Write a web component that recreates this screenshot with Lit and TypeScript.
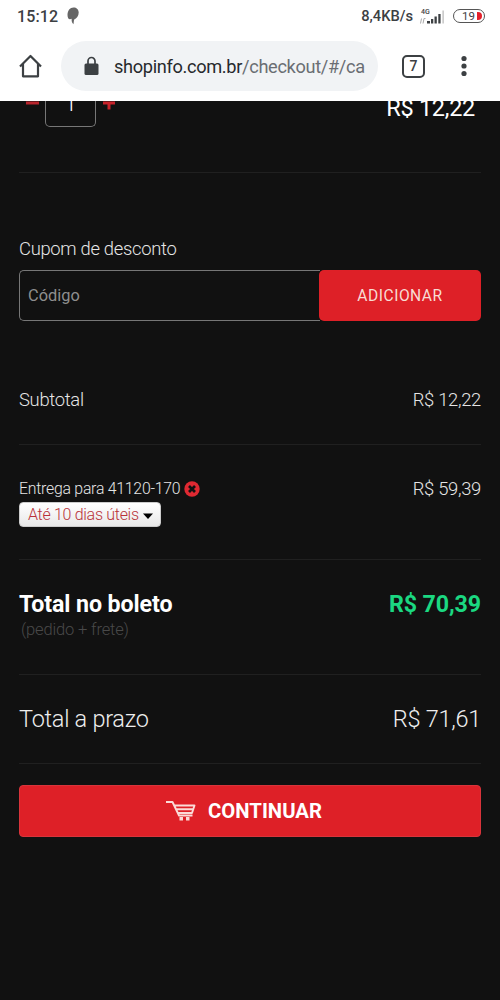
import { LitElement, html, css } from "lit";
import { customElement } from "lit/decorators.js";

@customElement("browser-bar")
class BrowserBar extends LitElement {
  static styles = css`
    :host { display: block; height: 101px; background: #fff; color: #3c4043; position: relative; z-index: 1; }
    .status { display: flex; align-items: center; height: 32px; padding: 0 15px 0 17px; box-sizing: border-box; font-size: 16px; font-weight: 500; }
    .time { width: 42px; letter-spacing: 0.1px; white-space: nowrap; }
    .leaf { margin-left: 8px; margin-right: auto; }
    .speed { font-size: 14.7px; white-space: nowrap; }
    .signal { margin-left: 6px; }
    .battery { margin-left: 7px; width: 32px; height: 14px; box-sizing: border-box; border: 1.5px solid #555; border-radius: 8px; display: flex; align-items: center; justify-content: flex-end; font-size: 11.5px; font-weight: 400; line-height: 11px; gap: 2px; padding-right: 2px; }
    .level { width: 5px; height: 8px; background: #e3202b; border-radius: 0 5px 5px 0; }
    .tools { display: flex; align-items: center; height: 68px; }
    .home { margin-left: 18px; }
    .pill { margin-left: 18px; width: 317px; height: 50px; border-radius: 25px; background: #f1f3f5; display: flex; align-items: center; box-sizing: border-box; padding-left: 23px; }
    .url { margin-left: 15px; font-size: 18.2px; letter-spacing: -0.33px; line-height: 24px; margin-top: 1px; color: #27292c; white-space: nowrap; }
    .path { color: #6a6e73; }
    .tabs { margin-left: 24px; width: 23px; height: 23px; box-sizing: border-box; border: 2px solid #3c4043; border-radius: 5px; display: flex; align-items: center; justify-content: center; font-size: 14px; font-weight: 500; }
    .more { margin-left: 36px; }
    svg { display: block; flex: none; }
  `;
  render() {
    return html`
      <div class="status">
        <span class="time">15:12</span>
        <svg class="leaf" width="12" height="18" viewBox="0 0 12 18"><path fill="#666" d="M6.500 .5C3 .5 .5 3.500 .5 8c0 2.800 1 4.200 2.500 4.200.7 0 1.200-.2 1.700-.5-.3 2 .2 4 1.700 5.500.5-1 .2-3.200.8-4.700C9.500 11.500 11.700 9 11.700 5.500 11.700 2.500 9.500.5 6.500 .5Z"/></svg>
        <span class="speed">8,4KB/s</span>
        <svg class="signal" width="27" height="18" viewBox="0 0 27 18">
          <text x="2" y="6.500" font-size="7" font-weight="500" fill="#444">4G</text>
          <path d="M1.500 16.500l1-5M4 16.500l1-5h1.500" stroke="#aaa" stroke-width="1" fill="none"/>
          <path d="M8 16.500h3v-2.500H8ZM12 16.500h2.300v-4.500H12ZM15.500 16.500h2.300v-7h-2.300ZM19.300 16.500h2.300v-9.500h-2.300Z" fill="#3c4043"/>
          <path d="M23.300 16.500h1.700v-13h-1.700Z" fill="#ccc"/>
        </svg>
        <span class="battery">19<i class="level"></i></span>
      </div>
      <div class="tools">
        <svg class="home" width="25" height="26" viewBox="0 0 25 26"><path d="M2 13.500 12.500 3 23 13.500M5 11v12.300h15V11" fill="none" stroke="#3c4043" stroke-width="2.200" stroke-linejoin="round"/></svg>
        <div class="pill">
          <svg width="15" height="20" viewBox="0 0 15 20"><rect x=".5" y="7.500" width="14" height="11.500" rx="1.500" fill="#3c4043"/><path d="M4 8V5a3.500 3.500 0 0 1 7 0v3" fill="none" stroke="#3c4043" stroke-width="1.700"/></svg>
          <span class="url">shopinfo.com.br<span class="path">/checkout/#/ca</span></span>
        </div>
        <div class="tabs">7</div>
        <svg class="more" width="6" height="22" viewBox="0 0 6 22" fill="#3c4043"><circle cx="3" cy="3.500" r="2.600"/><circle cx="3" cy="11" r="2.600"/><circle cx="3" cy="18.500" r="2.600"/></svg>
      </div>`;
  }
}

@customElement("app-root")
class AppRoot extends LitElement {
  static styles = css`
    :host { display: block; height: 1000px; overflow: hidden; background: #111; color: #e6e6e6; font-family: Roboto, "Liberation Sans", sans-serif; }
    main { padding: 0 19px; font-weight: 300; font-size: 18.4px; letter-spacing: -0.3px; line-height: 24px; white-space: nowrap; }
    section { box-sizing: border-box; border-bottom: 1px solid #202020; display: flex; justify-content: space-between; align-items: flex-start; }
    .item { height: 72px; overflow: hidden; }
    .qty { display: flex; color: #d8222a; }
    .qty svg { display: block; }
    .count { width: 51px; height: 26px; box-sizing: border-box; border: 1px solid #777; border-top: 0; border-radius: 0 0 5px 5px; color: #fff; font-size: 22px; text-align: center; line-height: 24px; }
    .count span { display: block; margin-top: -9px; }
    .price { font-size: 23.5px; letter-spacing: -0.28px; color: #fff; margin: -5px 6px 0 0; font-weight: 400; }
    .coupon { height: 149px; box-sizing: border-box; padding-top: 64px; }
    .coupon label { display: block; }
    .field { display: flex; margin-top: 9px; height: 51px; letter-spacing: 0; }
    .code { flex: 1; box-sizing: border-box; border: 1px solid #777; border-right: 0; border-radius: 5px 0 0 5px; padding-left: 8px; line-height: 50px; font-size: 16.4px; font-weight: 400; color: #8e8e8e; }
    .add { width: 162px; border-radius: 5px; background: #de2027; color: #f8dcd4; text-align: center; line-height: 52px; font-size: 15.6px; font-weight: 400; letter-spacing: 0.5px; margin-left: -1px; }
    .subtotal { height: 123px; padding-top: 66px; }
    .delivery { height: 115px; padding-top: 32px; }
    .to { display: flex; align-items: center; font-size: 15.8px; letter-spacing: -0.23px; gap: 4px; }
    .to svg { display: block; margin-top: -1px; }
    .select { display: flex; align-items: center; margin-top: 1px; width: 142px; height: 25px; box-sizing: border-box; border: 1px solid #ccc; border-radius: 4px; background: linear-gradient(#fff, #e8e8e8); color: #b93239; font-size: 16px; letter-spacing: -0.3px; padding-left: 8px; gap: 4px; }
    .select svg { margin-top: 2px; }
    .boleto { height: 115px; padding-top: 32px; font-size: 23.2px; letter-spacing: -0.1px; font-weight: 700; }
    .boleto .name { color: #fff; }
    .green { color: #1bd881; }
    .note { font-size: 16.5px; letter-spacing: -0.15px; font-weight: 300; color: #494949; margin: 2px 0 0 2px; }
    .prazo { height: 89px; padding-top: 32px; font-size: 23.5px; letter-spacing: -0.27px; color: #eee; }
    .go { display: flex; align-items: center; justify-content: center; margin-top: 21px; height: 52px; padding: 0 12px 1px 0; box-sizing: border-box; border-radius: 4px; background: #de2027; border: 1px solid #d9343b; color: #fff; font-size: 20.3px; letter-spacing: 0; font-weight: 700; gap: 12px; }
    .go svg { margin-top: -1px; }
  `;
  render() {
    return html`
      <browser-bar></browser-bar>
      <main>
        <section class="item">
          <div class="qty">
            <svg width="26" height="26" viewBox="0 0 26 26"><path d="M7 .5h13v3H7Z" fill="#b9252d"/></svg>
            <div class="count"><span>1</span></div>
            <svg width="26" height="26" viewBox="0 0 26 26"><path d="M7 .5h12v3h-4.500v5h-3v-5H7Z" fill="#c8222a"/></svg>
          </div>
          <span class="price">R$ 12,22</span>
        </section>
        <div class="coupon">
          <label>Cupom de desconto</label>
          <div class="field"><div class="code">Código</div><div class="add">ADICIONAR</div></div>
        </div>
        <section class="subtotal"><span>Subtotal</span><span>R$ 12,22</span></section>
        <section class="delivery">
          <div>
            <div class="to">Entrega para 41120-170
              <svg width="16" height="16" viewBox="0 0 16 16"><circle cx="8" cy="8" r="7.700" fill="#df2932"/><path d="m5 5 6 6M11 5l-6 6" stroke="#111" stroke-width="2.700"/></svg>
            </div>
            <div class="select">Até 10 dias úteis<svg width="10" height="6" viewBox="0 0 10 6"><path d="M0 .5h10L5 6Z" fill="#000"/></svg></div>
          </div>
          <span>R$ 59,39</span>
        </section>
        <section class="boleto">
          <div><div class="name">Total no boleto</div><div class="note">(pedido + frete)</div></div>
          <span class="green">R$ 70,39</span>
        </section>
        <section class="prazo"><span>Total a prazo</span><span>R$ 71,61</span></section>
        <div class="go">
          <svg width="30" height="21" viewBox="0 0 30 21" fill="none" stroke="#fbdcd8" stroke-width="1.900"><path d="M0 2h6.500l6.500 13.500h13.500M8 5.500h20.500l-2.500 7.500H12.500M10 9.200H27" stroke-linejoin="round"/><path d="M13.500 17h3.500v3.500h-3.500ZM20 17h3.500v3.500h-3.500Z" fill="#fbdcd8" stroke="none"/></svg>
          <span>CONTINUAR</span>
        </div>
      </main>`;
  }
}
